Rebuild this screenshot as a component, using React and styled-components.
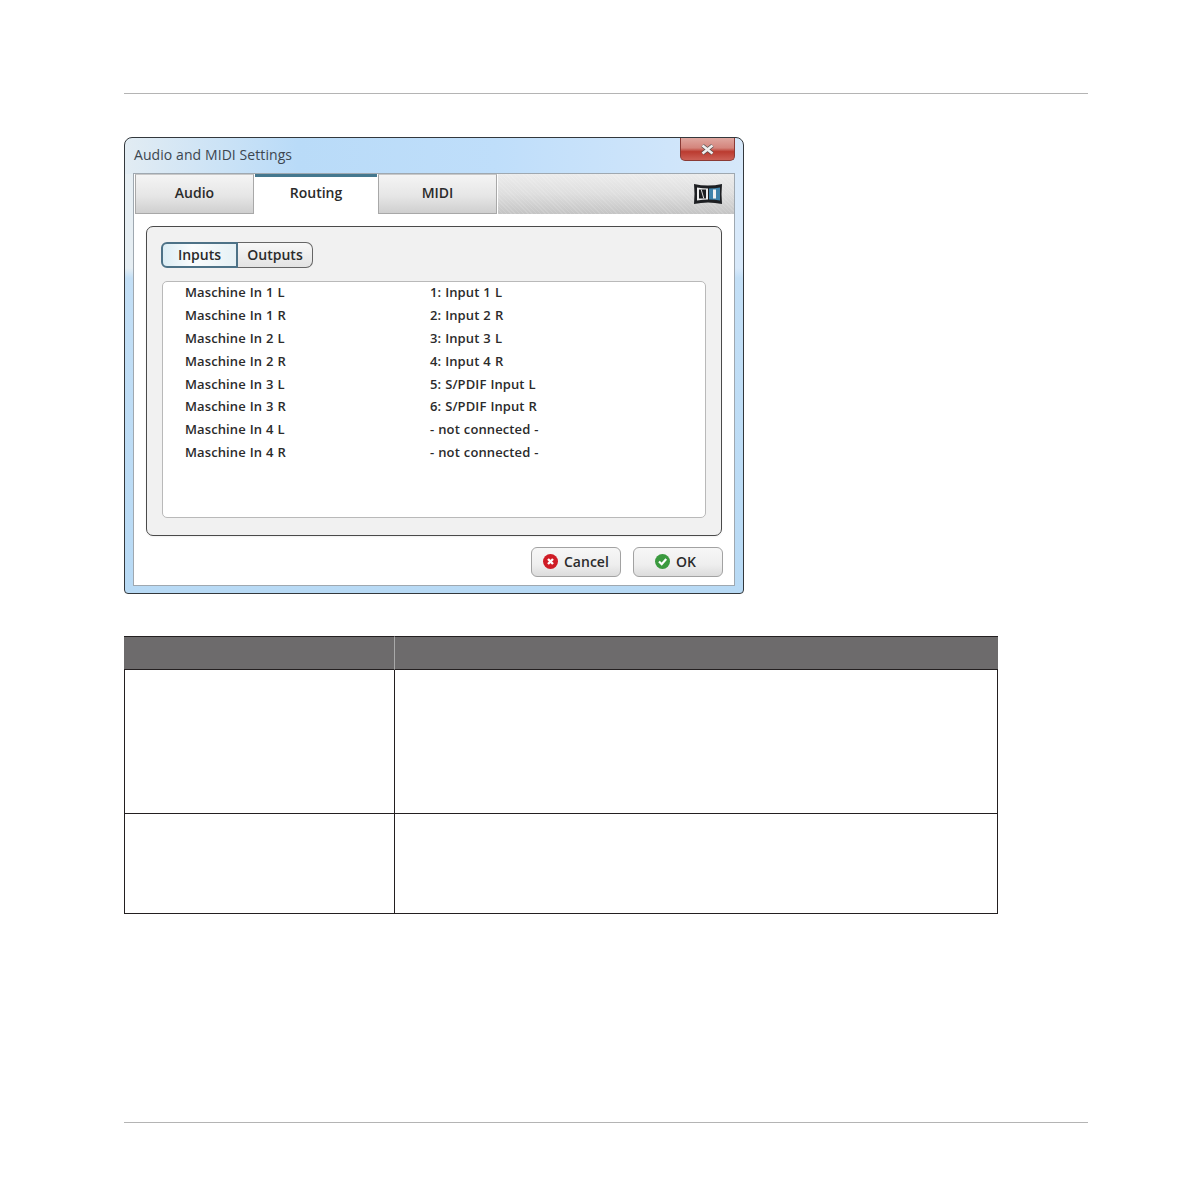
import React from "react";
import styled, { createGlobalStyle } from "styled-components";

const Global = createGlobalStyle`
  html, body { margin: 0; padding: 0; background: #fff; }
  body { font-family: "Open Sans", "Liberation Sans", sans-serif; }
`;

const Page = styled.div`
  width: 1191px;
  height: 1191px;
  box-sizing: border-box;
  padding: 93px 103px 0 124px;
  overflow: hidden;
`;
const Rule = styled.div`
  height: 1px;
  background: #b4b4b4;
`;
const Window = styled.div`
  box-sizing: border-box;
  width: 620px;
  height: 457px;
  margin-top: 43px;
  border: 1px solid #33383c;
  border-radius: 8px 8px 4px 4px;
  padding: 0 8px 8px 8px;
  display: flex;
  flex-direction: column;
  background:
    linear-gradient(90deg, #e2ecf3 0%, #b9dbf8 28%, #bfdefa 60%, #d6e8fa 100%) top / 100% 36px no-repeat,
    linear-gradient(180deg, #e6eef3 0, #e6eef3 130px, #c3dff6 140px, #b8daf5 100%) left / 50% 100% no-repeat,
    linear-gradient(180deg, #d8e9fa 0, #d8e9fa 130px, #c3dff6 140px, #b8daf5 100%) right / 50% 100% no-repeat;
`;
const TitleBar = styled.div`
  height: 35px;
  flex: none;
  display: flex;
  justify-content: space-between;
  align-items: flex-start;
  font-size: 14px;
  color: #3c4650;
`;
const Title = styled.span`
  margin: 7px 0 0 1px;
  line-height: 19px;
  letter-spacing: 0.08px;
`;
const CloseBtn = styled.div`
  width: 55px;
  height: 23px;
  box-sizing: border-box;
  border: 1px solid #8a3a35;
  border-top: none;
  border-radius: 0 0 5px 5px;
  display: flex;
  align-items: center;
  justify-content: center;
  background: linear-gradient(180deg, #dfa7a0 0%, #d4857c 45%, #bb3b30 62%, #cc6056 100%);
`;
const Client = styled.div`
  flex: 1;
  display: flex;
  flex-direction: column;
  background: #fff;
  border: 1px solid #9fa8b0;
`;
const TabBar = styled.div`
  display: flex;
  height: 40px;
  flex: none;
  padding-left: 1px;
`;
const Tab = styled.div`
  box-sizing: border-box;
  width: ${p => p.$w}px;
  margin-right: 1px;
  display: flex;
  align-items: center;
  justify-content: center;
  font-size: 14px;
  font-weight: 600;
  color: #2b2b2b;
  ${p => p.$active
    ? `background:#fff; border-top:3px solid #44788f; padding-bottom:6px;`
    : `background:linear-gradient(180deg,#f4f4f4 0%,#e6e6e6 55%,#cfcfcf 100%); border:1px solid #a8a8a8; border-top-color:#c8c8c8; padding-bottom:4px;`}
`;
const TabFill = styled.div`
  flex: 1;
  display: flex;
  align-items: center;
  justify-content: flex-end;
  padding-right: 11px;
  background:
    repeating-linear-gradient(45deg, rgba(255,255,255,.12) 0 1px, transparent 1px 3px),
    linear-gradient(180deg, #ececec 0%, #dedede 50%, #c4c4c4 100%);
`;
const Content = styled.div`
  flex: 1;
  display: flex;
  flex-direction: column;
  padding: 12px 12px 8px 12px;
`;
const Panel = styled.div`
  box-sizing: border-box;
  height: 310px;
  background: #f1f1f1;
  border: 1px solid #4a4a4a;
  border-radius: 7px;
  padding: 15px 15px 17px 14px;
  display: flex;
  flex-direction: column;
  box-shadow: 0 1px 2px rgba(0,0,0,.06);
`;
const Segments = styled.div`
  display: flex;
  width: 152px;
  height: 26px;
  flex: none;
`;
const Segment = styled.div`
  box-sizing: border-box;
  flex: ${p => p.$active ? "0 0 77px" : "1"};
  display: flex;
  align-items: center;
  justify-content: center;
  padding-bottom: 2px;
  font-size: 14px;
  font-weight: 600;
  color: #2b2b2b;
  ${p => p.$active
    ? `border:2px solid #4d7287; border-radius:6px 0 0 6px; background:linear-gradient(90deg,#dcedf4,#fafcfd 40%,#e6f1f5);`
    : `border:1px solid #666; border-left:none; border-radius:0 7px 7px 0; background:linear-gradient(180deg,#f8f8f8,#e3e3e3);`}
`;
const List = styled.div`
  box-sizing: border-box;
  flex: 1;
  margin-top: 13px;
  margin-left: 1px;
  background: #fff;
  border: 1px solid #b9b9b9;
  border-radius: 5px;
  padding: 0 0 0 22px;
`;
const Row = styled.div`
  display: grid;
  grid-template-columns: 245px 1fr;
  height: 22.9px;
  line-height: 21px;
  font-size: 13px;
  font-weight: 600;
  letter-spacing: 0.1px;
  word-spacing: 0.5px;
  color: #2b2b2b;
`;
const Footer = styled.div`
  display: flex;
  justify-content: flex-end;
  gap: 12px;
  margin: 11px -1px 0 0;
`;
const Button = styled.div`
  box-sizing: border-box;
  width: 90px;
  height: 30px;
  display: flex;
  align-items: center;
  padding: 0 0 2px ${p => p.$inset}px;
  gap: 6px;
  font-size: 14px;
  font-weight: 600;
  color: #2b2b2b;
  border: 1px solid #a2a2a2;
  border-radius: 6px;
  background: linear-gradient(180deg, #f7f7f7 0%, #eeeeee 60%, #dcdcdc 100%);
`;
const Table = styled.div`
  box-sizing: border-box;
  width: 874px;
  margin-top: 42px;
  display: grid;
  grid-template-columns: 269px 1fr;
  grid-template-rows: 34px 144px 99px;
  border: 1px solid #231f20;
  border-top: none;
`;
const Head = styled.div`
  background: #6d6b6c;
  border-top: 1px solid #231f20;
  border-bottom: 1px solid #231f20;
  margin-left: ${p => p.$first ? "-1px" : "0"};
  margin-right: ${p => p.$last ? "-1px" : "0"};
  ${p => p.$last && "border-left: 1px solid #a9a9a9;"}
`;
const Cell = styled.div`
  ${p => p.$right && "border-left: 1px solid #231f20;"}
  ${p => p.$bottom && "border-bottom: 1px solid #231f20;"}
`;
const BottomRule = styled(Rule)`
  margin-top: 208px;
`;

const rows = [
  ["Maschine In 1 L", "1: Input 1 L"],
  ["Maschine In 1 R", "2: Input 2 R"],
  ["Maschine In 2 L", "3: Input 3 L"],
  ["Maschine In 2 R", "4: Input 4 R"],
  ["Maschine In 3 L", "5: S/PDIF Input L"],
  ["Maschine In 3 R", "6: S/PDIF Input R"],
  ["Maschine In 4 L", "- not connected -"],
  ["Maschine In 4 R", "- not connected -"],
];

const NiLogo = () => (
  <svg width="30" height="22" viewBox="0 0 30 22">
    <path d="M1 1 Q15 4 29 1 Q28 11 29 21 Q15 18 1 21 Q2 11 1 1 Z" fill="#1d1f22" />
    <path d="M4 4.5 Q10 5.5 15 5.5 L15 16.5 Q10 16.5 4 17.5 Z" fill="#eeeeee" />
    <path d="M16 5.5 Q22 5.5 27 4.5 L27 17.5 Q22 16.5 16 16.5 Z" fill="#3f83ab" />
    <rect x="6" y="6.5" width="7" height="9" fill="#1d1f22" />
    <path d="M8.2 6.5 L10.8 15.5" stroke="#eeeeee" strokeWidth="0.9" />
    <rect x="20" y="6.5" width="3" height="9" fill="#f2f2f2" />
  </svg>
);
const CloseX = () => (
  <svg width="15" height="11" viewBox="0 0 15 11">
    <path d="M2.5 1.5 L12.5 9.5 M12.5 1.5 L2.5 9.5" stroke="#4a4a4a" strokeWidth="3.8" />
    <path d="M2.5 1.5 L12.5 9.5 M12.5 1.5 L2.5 9.5" stroke="#f1eeee" strokeWidth="2.6" />
  </svg>
);
const CancelIcon = () => (
  <svg width="15" height="15" viewBox="0 0 15 15">
    <circle cx="7.5" cy="7.5" r="7.5" fill="#cf1c26" />
    <path d="M5 5 L10 10 M10 5 L5 10" stroke="#fff" strokeWidth="2.4" />
  </svg>
);
const OkIcon = () => (
  <svg width="15" height="15" viewBox="0 0 15 15">
    <circle cx="7.5" cy="7.5" r="7.5" fill="#3b9a3f" />
    <path d="M4 7.5 L6.7 10.2 L11.2 5" stroke="#fff" strokeWidth="2.2" fill="none" />
  </svg>
);

export default function App() {
  return (
    <Page>
      <Global />
      <Rule />
      <Window>
        <TitleBar>
          <Title>Audio and MIDI Settings</Title>
          <CloseBtn><CloseX /></CloseBtn>
        </TitleBar>
        <Client>
          <TabBar>
            <Tab $w={119}>Audio</Tab>
            <Tab $w={122} $active>Routing</Tab>
            <Tab $w={119}>MIDI</Tab>
            <TabFill><NiLogo /></TabFill>
          </TabBar>
          <Content>
            <Panel>
              <Segments>
                <Segment $active>Inputs</Segment>
                <Segment>Outputs</Segment>
              </Segments>
              <List>
                {rows.map(([a, b], i) => (
                  <Row key={i}><span>{a}</span><span>{b}</span></Row>
                ))}
              </List>
            </Panel>
            <Footer>
              <Button $inset={11}><CancelIcon />Cancel</Button>
              <Button $inset={21}><OkIcon />OK</Button>
            </Footer>
          </Content>
        </Client>
      </Window>
      <Table>
        <Head $first />
        <Head $last />
        <Cell $bottom />
        <Cell $right $bottom />
        <Cell />
        <Cell $right />
      </Table>
      <BottomRule />
    </Page>
  );
}
